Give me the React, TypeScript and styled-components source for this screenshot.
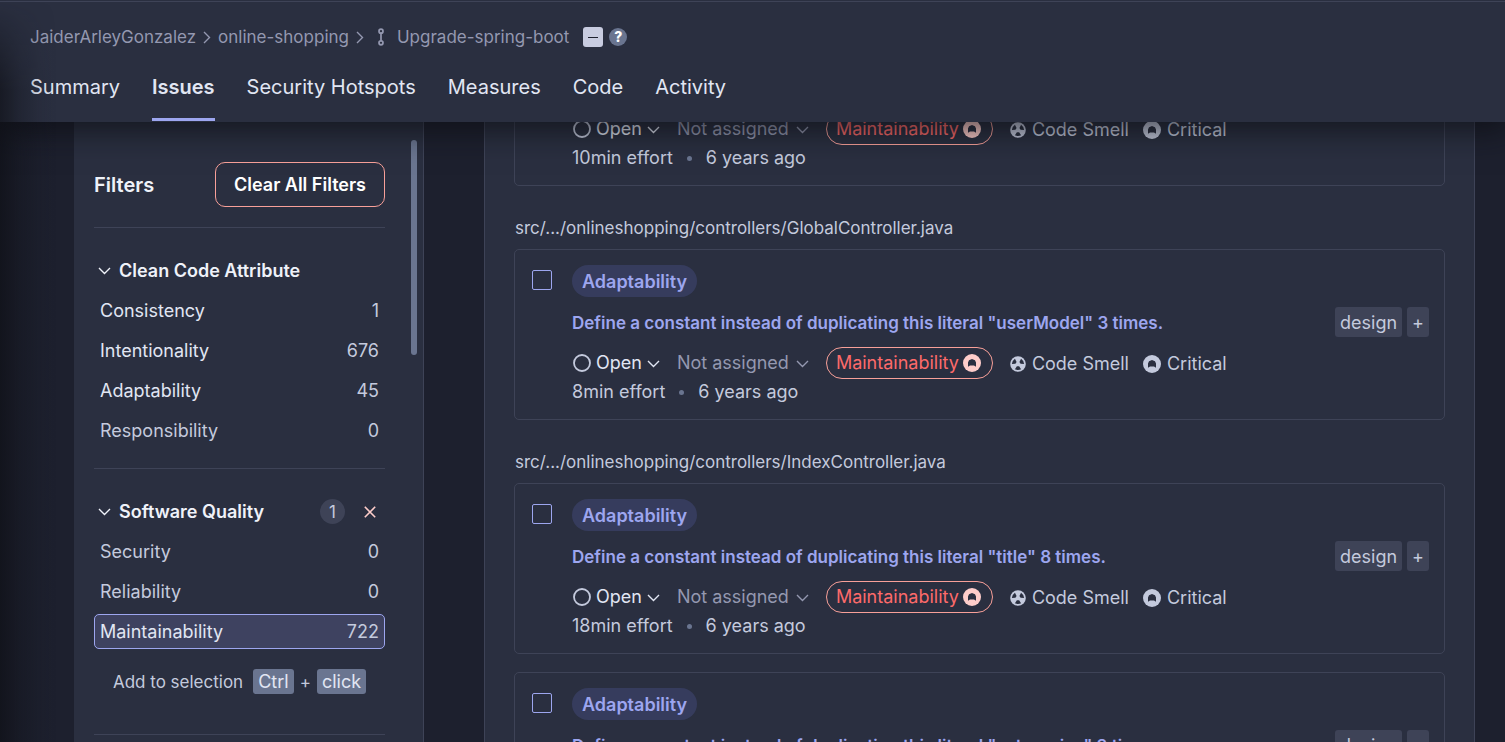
import React from "react";
import styled, { createGlobalStyle } from "styled-components";

const c = {
  page: "#1d202e",
  panel: "#2a2f40",
  line: "#3e4357",
  text: "#c4cadd",
  bright: "#e1e6f3",
  strong: "#eff2f9",
  muted: "#9498b0",
  accent: "#9da6ef",
  selected: "#3e4260",
  pill: "#363c5d",
  tag: "#3e4357",
  key: "#6a7590",
  red: "#fd6a6a",
  redLine: "#f8a099",
  pink: "#fecdca",
};

const GlobalStyle = createGlobalStyle`
  *, *::before, *::after { box-sizing: border-box; }
  body {
    margin: 0;
    background: ${c.page};
    color: ${c.text};
    font-family: Inter, "Liberation Sans", sans-serif;
    font-size: 18px;
    line-height: 26px;
  }
  button { font: inherit; color: inherit; background: none; border: 0; padding: 0; cursor: pointer; }
  a { color: inherit; text-decoration: none; }
  svg { flex: none; display: block; }
`;

const Page = styled.div`
  position: relative;
  display: flex;
  flex-direction: column;
  height: 100vh;
  overflow: hidden;
`;

const EdgeShadow = styled.div`
  position: absolute;
  inset: 0 auto 0 0;
  width: 56px;
  pointer-events: none;
  z-index: 3;
  background: linear-gradient(to right, rgba(12, 13, 18, 0.6), rgba(12, 13, 18, 0.28) 35%, rgba(12, 13, 18, 0.08) 70%, transparent);
  mask-image: linear-gradient(to bottom, transparent, #000 90px);
`;

const Header = styled.header`
  position: relative;
  z-index: 2;
  flex: none;
  padding: 1px 30px 0;
  background: ${c.panel};
  box-shadow: 0 4px 30px 4px rgba(10, 11, 16, 0.7);
`;

const HeaderTop = styled.div`
  margin: 0 -30px;
  border-top: 1px solid ${c.line};
`;

const Crumbs = styled.nav`
  display: flex;
  align-items: center;
  height: 70px;
  font-size: 17px;
  color: ${c.muted};
  svg { margin: 0 7px; }
`;

const Branch = styled.a`
  display: flex;
  align-items: center;
  margin-right: 14px;
  svg { margin: 0 12px 0 6px; }
`;

const Gate = styled.span`
  display: grid;
  place-items: center;
  width: 20px;
  height: 20px;
  border-radius: 3px;
  background: #c8cce0;
  &::after { content: ""; width: 10px; height: 1px; background: #1d202e; }
`;

const Help = styled.button`
  display: grid;
  place-items: center;
  width: 18px;
  height: 18px;
  margin-left: 6px;
  border-radius: 50%;
  background: ${c.key};
  color: #fff;
  font-size: 14px;
  line-height: 18px;
  font-weight: 800;
`;

const Tabs = styled.nav`
  display: flex;
  gap: 32px;
  height: 50px;
`;

const Tab = styled.a<{ $active?: boolean }>`
  padding-bottom: 16px;
  height: 49px;
  line-height: 30px;
  font-size: 20px;
  color: ${c.bright};
  font-weight: ${(p) => (p.$active ? 600 : 400)};
  border-bottom: 3px solid ${(p) => (p.$active ? c.accent : "transparent")};
`;

const Columns = styled.div`
  display: flex;
  align-items: stretch;
  gap: 60px;
  flex: 1;
  min-height: 0;
  padding: 0 30px 0 74px;
`;

const Sidebar = styled.aside`
  flex: none;
  display: flex;
  gap: 26px;
  width: 350px;
  padding: 18px 6px 0 20px;
  background: ${c.panel};
  border-right: 1px solid ${c.line};
`;

const Facets = styled.div`
  flex: 1;
  min-width: 0;
  overflow: hidden;
`;

const ScrollThumb = styled.div`
  width: 6px;
  height: 215px;
  border-radius: 3px;
  background: ${c.key};
`;

const FilterHead = styled.div`
  display: flex;
  align-items: center;
  justify-content: space-between;
  padding: 22px 0 20px;
`;

const FilterTitle = styled.h2`
  margin: 0;
  font-size: 20px;
  font-weight: 600;
  color: ${c.strong};
`;

const ClearButton = styled.button`
  height: 45px;
  padding: 0 18px;
  border: 1px solid ${c.redLine};
  border-radius: 10px;
  color: #fff;
  font-weight: 600;
`;

const Facet = styled.section`
  padding: 20px 0;
  border-top: 1px solid ${c.line};
`;

const FacetHead = styled.div`
  display: flex;
  align-items: center;
  height: 45px;
`;

const FacetToggle = styled.button`
  display: flex;
  align-items: center;
  gap: 8px;
  margin-right: auto;
  padding-left: 4px;
  color: ${c.strong};
  font-weight: 600;
`;

const Count = styled.span`
  display: grid;
  place-items: center;
  width: 25px;
  height: 25px;
  border-radius: 50%;
  background: ${c.tag};
  font-size: 17px;
  line-height: 20px;
`;

const ClearFacet = styled.button`
  display: grid;
  place-items: center;
  width: 30px;
  height: 30px;
  margin-left: 10px;
  color: ${c.pink};
`;

const Options = styled.div`
  display: grid;
  gap: 5px;
`;

const Option = styled.button<{ $on?: boolean }>`
  display: flex;
  align-items: center;
  justify-content: space-between;
  height: 35px;
  padding: 0 5px;
  border: 1px solid ${(p) => (p.$on ? c.accent : "transparent")};
  border-radius: 5px;
  background: ${(p) => (p.$on ? c.selected : "transparent")};
`;

const OptionName = styled.span<{ $lit?: boolean }>`
  color: ${(p) => (p.$lit ? c.bright : c.text)};
`;

const Hint = styled.p`
  display: flex;
  align-items: center;
  justify-content: center;
  gap: 6px;
  height: 25px;
  margin: 20px 0;
  font-size: 17px;
`;

const Key = styled.kbd`
  padding: 0 5px;
  height: 25px;
  line-height: 25px;
  border-radius: 3px;
  background: ${c.key};
  color: ${c.bright};
  font-family: inherit;
  font-size: 18px;
  &:first-of-type { margin-left: 4px; }
`;

const Main = styled.main`
  flex: 1;
  min-width: 0;
  padding: 0 29px;
  overflow: hidden;
  background: ${c.panel};
  border: solid ${c.line};
  border-width: 0 1px;
`;

/* The list is shown scrolled, with its first card partly under the header. */
const List = styled.div`
  margin-top: -107px;
`;

const FileName = styled.h3`
  margin: 0;
  padding: 29px 1px 8px;
  font-size: 17px;
  font-weight: 400;
  color: ${c.text};
`;

const Card = styled.article`
  display: flex;
  gap: 20px;
  padding: 15px 15px 14px 17px;
  border: 1px solid ${c.line};
  border-radius: 5px;
  & + & { margin-top: 18px; }
`;

const Check = styled.input`
  appearance: none;
  flex: none;
  width: 20px;
  height: 20px;
  margin: 5px 0 0;
  border: 1px solid ${c.accent};
  border-radius: 2px;
`;

const CardBody = styled.div`
  flex: 1;
  min-width: 0;
`;

const Attribute = styled.span`
  display: inline-block;
  height: 32px;
  padding: 0 10px;
  line-height: 34px;
  border-radius: 16px;
  background: ${c.pill};
  color: ${c.accent};
  font-weight: 600;
  vertical-align: top;
`;

const TitleRow = styled.div`
  display: flex;
  align-items: center;
  gap: 5px;
  margin: 10px 0;
  height: 30px;
`;

const Title = styled.a`
  margin-right: auto;
  padding-top: 2px;
  color: ${c.accent};
  font-size: 17px;
  font-weight: 600;
  white-space: nowrap;
`;

const Tag = styled.button`
  height: 30px;
  padding: 2px 5px 0;
  border-radius: 3px;
  background: ${c.tag};
`;

const Meta = styled.div`
  display: flex;
  align-items: center;
  height: 32px;
  padding-left: 1px;
  white-space: nowrap;
`;

const MenuButton = styled.button<{ $tone: string; $gap: number }>`
  display: flex;
  align-items: center;
  gap: ${(p) => p.$gap}px;
  margin-right: 17px;
  color: ${(p) => p.$tone};
`;

const QualityPill = styled.span`
  display: flex;
  align-items: center;
  gap: 4px;
  height: 32px;
  margin-right: 17px;
  padding: 0 11px 0 9px;
  border: 1px solid ${c.redLine};
  border-radius: 16px;
  color: ${c.red};
  svg { color: ${c.pink}; }
`;

const Label = styled.span`
  display: flex;
  align-items: center;
  gap: 6px;
  margin-right: 14px;
  padding-top: 2px;
`;

const Effort = styled.div`
  display: flex;
  align-items: center;
`;

const Dot = styled.span`
  width: 5px;
  height: 5px;
  margin: 0 14px;
  border-radius: 50%;
  background: ${c.key};
`;

const Right = () => (
  <svg width="8" height="14" viewBox="0 0 8 14" fill="none" stroke="currentColor" strokeWidth="1.4">
    <path d="M1 2l5.5 5.5L1 13" />
  </svg>
);
const Down = () => (
  <svg width="13" height="9" viewBox="0 0 13 9" fill="none" stroke="currentColor" strokeWidth="1.4">
    <path d="M1 2l5.5 5.5L12 2" />
  </svg>
);
const BranchIcon = () => (
  <svg width="8" height="18" viewBox="0 0 8 18" fill="none" stroke="currentColor" strokeWidth="1.7">
    <circle cx="4" cy="3.2" r="2" />
    <circle cx="4" cy="14.8" r="2" />
    <path d="M4 5.2v7.6" />
  </svg>
);
const Cross = () => (
  <svg width="12" height="12" viewBox="0 0 12 12" fill="none" stroke="currentColor" strokeWidth="1.6">
    <path d="M.8.8l10.4 10.4M11.2.8L.8 11.2" />
  </svg>
);
const OpenIcon = () => (
  <svg width="18" height="18" viewBox="0 0 18 18" fill="none" stroke={c.text} strokeWidth="1.8">
    <circle cx="9" cy="9" r="8" />
  </svg>
);
const Severity = () => (
  <svg width="18" height="18" viewBox="0 0 18 18">
    <circle cx="9" cy="9" r="9" fill="currentColor" />
    <path d="M5 12.800V8.400L6 6.300 9 5l3 1.300 1 2.100v4.400L11 11.500H7z" fill={c.panel} />
  </svg>
);
const Smell = () => (
  <svg width="16" height="16" viewBox="0 0 16 16">
    <circle cx="8" cy="8" r="7.800" fill="currentColor" />
    <g fill={c.panel}>
      {[0, 120, 240].map((a) => (
        <path key={a} d="M6.900 10.300h2.200l2 3Q8 14.900 4.900 13.300z" transform={`rotate(${a} 8 8)`} />
      ))}
    </g>
  </svg>
);

type IssueProps = { id: string; title: string; effort: string };

const Issue = ({ id, title, effort }: IssueProps) => (
  <Card>
    <Check type="checkbox" id={id} aria-label={title} />
    <CardBody>
      <Attribute>Adaptability</Attribute>
      <TitleRow>
        <Title href="#">{title}</Title>
        <Tag>design</Tag>
        <Tag aria-label="Add tag">+</Tag>
      </TitleRow>
      <Meta>
        <MenuButton $tone={c.bright} $gap={5} aria-haspopup="menu">
          <OpenIcon />
          Open
          <Down />
        </MenuButton>
        <MenuButton $tone={c.muted} $gap={7} aria-haspopup="menu">
          Not assigned
          <Down />
        </MenuButton>
        <QualityPill>
          Maintainability
          <Severity />
        </QualityPill>
        <Label>
          <Smell />
          Code Smell
        </Label>
        <Label>
          <Severity />
          Critical
        </Label>
      </Meta>
      <Effort>
        {effort} effort
        <Dot />6 years ago
      </Effort>
    </CardBody>
  </Card>
);

type Opt = { name: string; count: number; lit?: boolean; on?: boolean };

const attributes: Opt[] = [
  { name: "Consistency", count: 1, lit: true },
  { name: "Intentionality", count: 676, lit: true },
  { name: "Adaptability", count: 45, lit: true },
  { name: "Responsibility", count: 0 },
];
const qualities: Opt[] = [
  { name: "Security", count: 0 },
  { name: "Reliability", count: 0 },
  { name: "Maintainability", count: 722, lit: true, on: true },
];

const OptionList = ({ items }: { items: Opt[] }) => (
  <Options>
    {items.map((o) => (
      <Option key={o.name} $on={o.on} aria-pressed={!!o.on}>
        <OptionName $lit={o.lit}>{o.name}</OptionName>
        <span>{o.count}</span>
      </Option>
    ))}
  </Options>
);

const tabs = ["Summary", "Issues", "Security Hotspots", "Measures", "Code", "Activity"];
const literal = (name: string, n: number) =>
  `Define a constant instead of duplicating this literal "${name}" ${n} times.`;

export default function App() {
  return (
    <>
      <GlobalStyle />
      <Page>
        <EdgeShadow />
        <Header>
          <HeaderTop />
          <Crumbs aria-label="Breadcrumb">
            <a href="#">JaiderArleyGonzalez</a>
            <Right />
            <a href="#">online-shopping</a>
            <Right />
            <Branch href="#">
              <BranchIcon />
              Upgrade-spring-boot
            </Branch>
            <Gate />
            <Help aria-label="Help">?</Help>
          </Crumbs>
          <Tabs>
            {tabs.map((t) => (
              <Tab key={t} href="#" $active={t === "Issues"}>
                {t}
              </Tab>
            ))}
          </Tabs>
        </Header>
        <Columns>
          <Sidebar>
            <Facets>
              <FilterHead>
                <FilterTitle>Filters</FilterTitle>
                <ClearButton>Clear All Filters</ClearButton>
              </FilterHead>
              <Facet>
                <FacetHead>
                  <FacetToggle>
                    <Down />
                    Clean Code Attribute
                  </FacetToggle>
                </FacetHead>
                <OptionList items={attributes} />
              </Facet>
              <Facet>
                <FacetHead>
                  <FacetToggle>
                    <Down />
                    Software Quality
                  </FacetToggle>
                  <Count>1</Count>
                  <ClearFacet aria-label="Clear Software Quality">
                    <Cross />
                  </ClearFacet>
                </FacetHead>
                <OptionList items={qualities} />
                <Hint>
                  Add to selection <Key>Ctrl</Key>+<Key>click</Key>
                </Hint>
              </Facet>
              <Facet />
            </Facets>
            <ScrollThumb />
          </Sidebar>
          <Main>
            <List>
              <Issue id="i0" title={literal("message", 4)} effort="10min" />
              <FileName>src/.../onlineshopping/controllers/GlobalController.java</FileName>
              <Issue id="i1" title={literal("userModel", 3)} effort="8min" />
              <FileName>src/.../onlineshopping/controllers/IndexController.java</FileName>
              <Issue id="i2" title={literal("title", 8)} effort="18min" />
              <Issue id="i3" title={literal("categories", 3)} effort="8min" />
            </List>
          </Main>
        </Columns>
      </Page>
    </>
  );
}
